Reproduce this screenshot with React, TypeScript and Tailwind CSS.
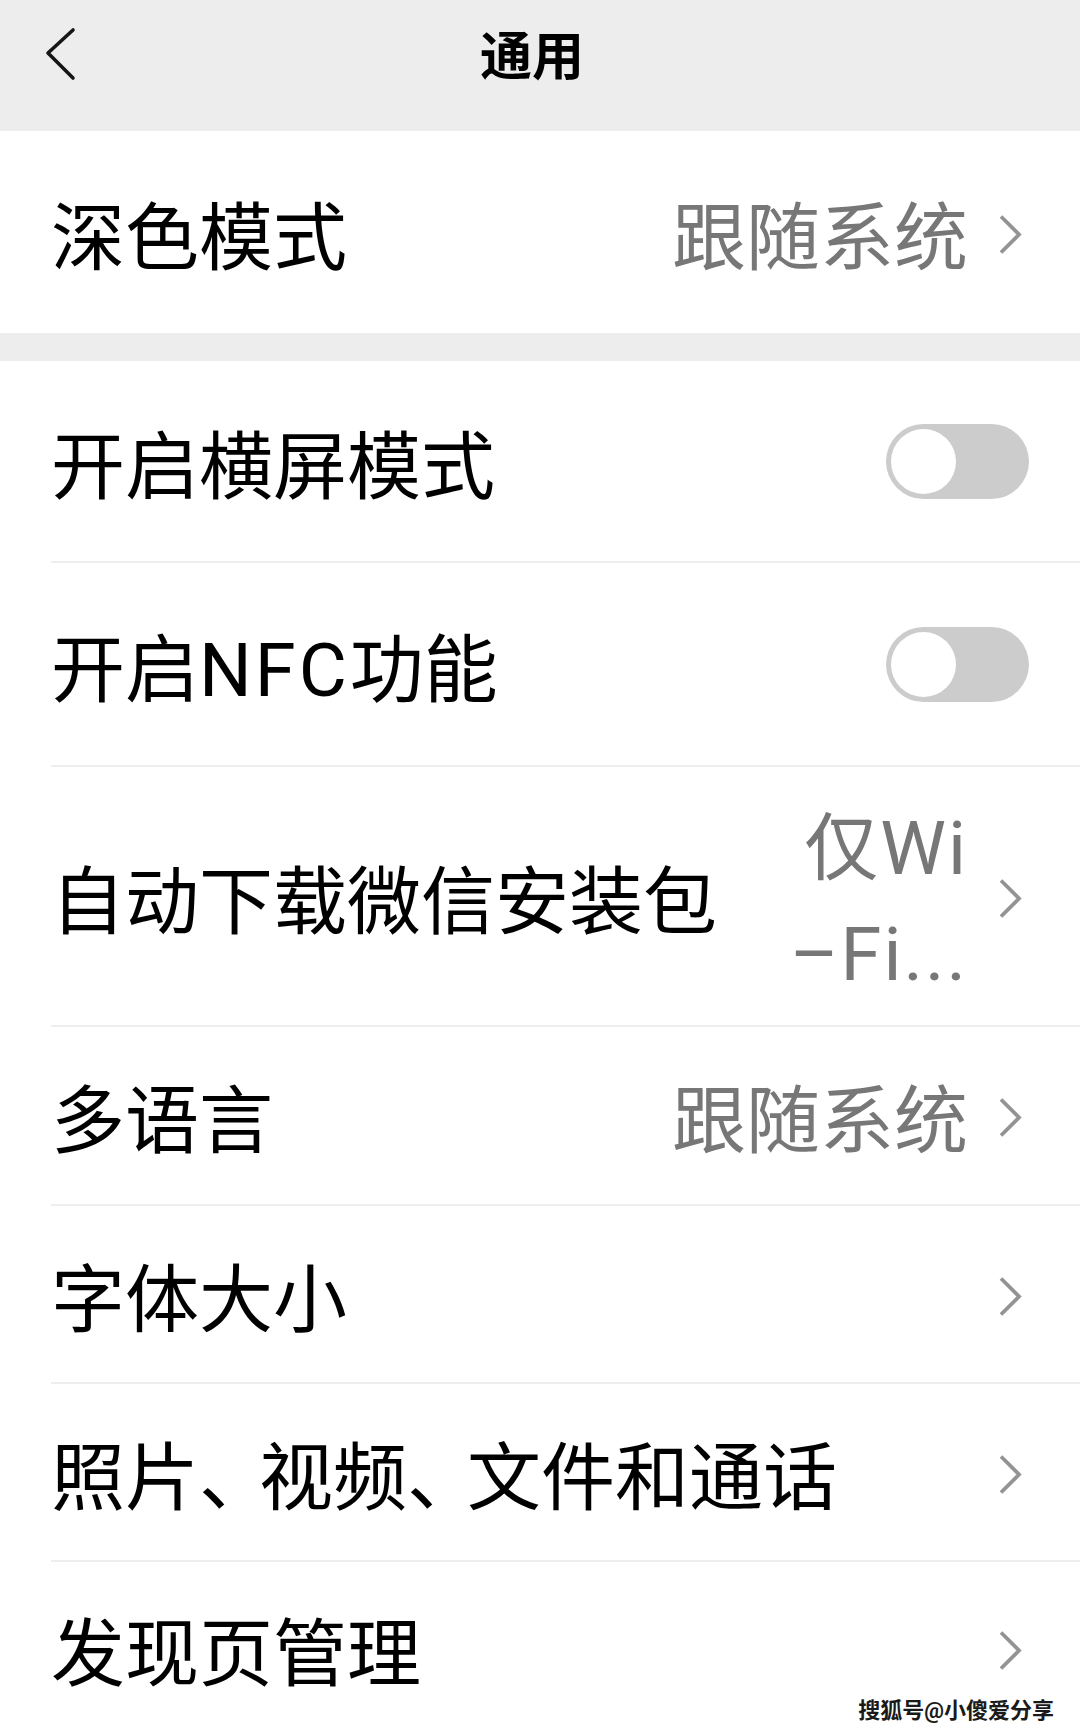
import type { ReactNode } from "react";

function Chevron() {
  return (
    <svg
      width="23"
      height="39"
      viewBox="0 0 23 39"
      className="ml-[31px] mt-[4px] shrink-0 overflow-visible"
    >
      <polyline
        points="2,1.5 20,19.5 2,37.5"
        fill="none"
        stroke="#939393"
        strokeWidth="3.8"
      />
    </svg>
  );
}

function Toggle() {
  return (
    <div className="flex h-[75px] w-[143px] shrink-0 items-center rounded-full bg-[#cccccc] p-[5px]">
      <div className="size-[65px] rounded-full bg-white" />
    </div>
  );
}

function Row({
  label,
  height,
  right,
  last,
  padRight = "pr-[58px]",
}: {
  label: ReactNode;
  height: string;
  right?: ReactNode;
  last?: boolean;
  padRight?: string;
}) {
  return (
    <div className="bg-white pl-[51px]">
      <div
        className={`flex items-center justify-between ${height} ${padRight} ${
          last ? "" : "border-b-2 border-[#eeeeee]"
        }`}
      >
        <span className="inline-block pt-[13px] text-[74px] leading-none text-black">
          {label}
        </span>
        <div className="flex items-center">{right}</div>
      </div>
    </div>
  );
}

function Value({ text }: { text: string }) {
  return (
    <>
      <span className="inline-block pt-[13px] text-[74px] leading-none text-[#777777]">
        {text}
      </span>
      <Chevron />
    </>
  );
}

export default function App() {
  return (
    <div className="relative h-[1734px] w-[1080px] overflow-hidden bg-white font-['Roboto','Noto_Sans_CJK_SC',sans-serif]">
      {/* header */}
      <div className="h-[131px] bg-[#ededed]">
        <div className="flex h-[108px] items-center">
          <div className="flex w-[120px] items-center pl-[45px]">
            <svg width="32" height="56" viewBox="0 0 32 56">
              <polyline
                points="28,4 3,27 28,52"
                fill="none"
                stroke="#161616"
                strokeWidth="3.6"
                strokeLinecap="round"
                strokeLinejoin="round"
              />
            </svg>
          </div>
          <div className="flex-1 pt-[8px] text-center text-[52px] font-semibold leading-none text-black">
            通用
          </div>
          <div className="w-[136px]" />
        </div>
      </div>

      <Row label="深色模式" height="h-[202px]" last right={<Value text="跟随系统" />} />

      <div className="h-[28px] bg-[#ededed]" />

      <Row label="开启横屏模式" height="h-[202px]" padRight="pr-[51px]" right={<Toggle />} />
      <Row
        label={
          <>
            开启<span className="tracking-[3px]">NFC</span>功能
          </>
        }
        height="h-[204px]"
        padRight="pr-[51px]"
        right={<Toggle />}
      />
      <Row
        label="自动下载微信安装包"
        height="h-[260px]"
        right={
          <>
            <div className="pt-[12px] text-right text-[74px] leading-[106px] text-[#777777]">
              <span className="tracking-[2px]">仅Wi</span>
              <br />
              <span className="tracking-[2px]">–Fi...</span>
            </div>
            <Chevron />
          </>
        }
      />
      <Row label="多语言" height="h-[179px]" right={<Value text="跟随系统" />} />
      <Row label="字体大小" height="h-[178px]" right={<Chevron />} />
      <Row
        label={
          <>
            照片<span className="tracking-[-14px]">、</span>视频
            <span className="tracking-[-14px]">、</span>文件和通话
          </>
        }
        height="h-[178px]"
        right={<Chevron />}
      />
      <Row label="发现页管理" height="h-[172px]" last right={<Chevron />} />

      {/* watermark */}
      <div className="absolute bottom-[12px] right-[26px] text-[22px] font-bold leading-none text-[#1a1a1a] [text-shadow:0_0_2px_white]">
        搜狐号@小傻爱分享
      </div>
    </div>
  );
}
